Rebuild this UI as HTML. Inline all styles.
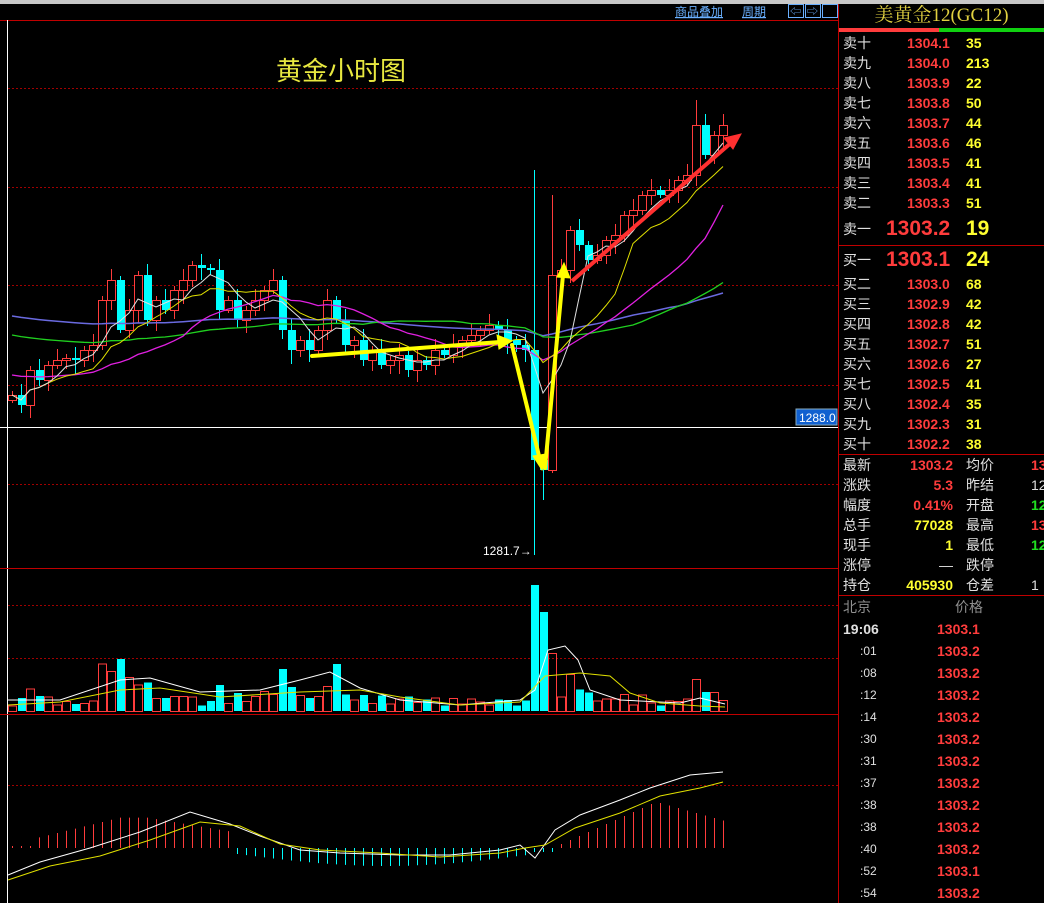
<!DOCTYPE html>
<html><head><meta charset="utf-8"><style>
body{margin:0;background:#000;width:1044px;height:903px;overflow:hidden;position:relative;font-family:"Liberation Sans","Noto Sans CJK SC",sans-serif}
#topbar{position:absolute;left:0;top:0;width:1044px;height:4px;background:#c8c8c8}
.t{position:absolute;white-space:nowrap;font-size:14px;line-height:20px}
.w{color:#e0e0e0}.r{color:#ff3c3c;font-weight:bold}.y{color:#ffff30;font-weight:bold}.g{color:#20e020;font-weight:bold}.gr{color:#909090}
</style></head><body>
<div id="topbar"></div>
<svg id="s" width="1044" height="903" style="position:absolute;left:0;top:0">
<line x1="0" y1="20.5" x2="838" y2="20.5" stroke="#c00000"/>
<line x1="838.5" y1="4" x2="838.5" y2="903" stroke="#c00000"/>
<line x1="7.5" y1="20" x2="7.5" y2="903" stroke="#fff"/>
<g stroke="#a00000" stroke-dasharray="2,2">
<line x1="8" y1="88.5" x2="838" y2="88.5"/><line x1="8" y1="187.5" x2="838" y2="187.5"/><line x1="8" y1="285.5" x2="838" y2="285.5"/><line x1="8" y1="385.5" x2="838" y2="385.5"/><line x1="8" y1="484.5" x2="838" y2="484.5"/>
<line x1="8" y1="605.5" x2="838" y2="605.5"/><line x1="8" y1="658.5" x2="838" y2="658.5"/>
<line x1="8" y1="785.5" x2="838" y2="785.5"/>
</g>
<line x1="0" y1="427.5" x2="838" y2="427.5" stroke="#fff"/>
<line x1="0" y1="568.5" x2="838" y2="568.5" stroke="#c00000"/>
<line x1="0" y1="714.5" x2="838" y2="714.5" stroke="#c00000"/>
<line x1="838" y1="30.5" x2="1044" y2="30.5" stroke="#c00000"/>
<rect x="839" y="28" width="100" height="4" fill="#ff3c3c"/><rect x="939" y="28" width="105" height="4" fill="#10d010"/>
<line x1="838" y1="245.5" x2="1044" y2="245.5" stroke="#c00000"/>
<line x1="838" y1="454.5" x2="1044" y2="454.5" stroke="#c00000"/>
<line x1="838" y1="595.5" x2="1044" y2="595.5" stroke="#c00000"/>
<rect x="796" y="409" width="41" height="16" fill="#1060d0" stroke="#8ab" />
<text x="799" y="422" fill="#fff" font-size="12" font-family="Liberation Sans">1288.0</text>
<text x="483" y="555" fill="#fff" font-size="12" font-family="Liberation Sans">1281.7→</text>
<text x="276" y="80" fill="#e8e840" font-size="26" font-family="Liberation Sans,Noto Sans CJK SC,sans-serif">黄金小时图</text>
<g fill="none" stroke="#6ab0ff" stroke-width="1"><rect x="788.5" y="4.5" width="15" height="13"/><rect x="805.5" y="4.5" width="15" height="13"/><rect x="822.5" y="4.5" width="15" height="13"/></g>
<text x="790" y="15" fill="#6ab0ff" font-size="11">⇦</text><text x="807" y="15" fill="#6ab0ff" font-size="11">⇨</text>
<text x="675" y="16" fill="#6ab0ff" font-size="12" text-decoration="underline" font-family="Liberation Sans,Noto Sans CJK SC,sans-serif">商品叠加</text>
<text x="742" y="16" fill="#6ab0ff" font-size="12" text-decoration="underline" font-family="Liberation Sans,Noto Sans CJK SC,sans-serif">周期</text>
<g id="g"></g>
<g fill="#ffff00" stroke="#ffff00" stroke-width="4" stroke-linecap="round">
<line x1="312" y1="356" x2="500" y2="342"/><polygon points="512,341 497,335 499,349" stroke-width="1"/>
<line x1="512" y1="345" x2="540" y2="460"/><polygon points="542,470 533,456 546,454" stroke-width="1"/>
<line x1="545" y1="468" x2="563" y2="275"/><polygon points="564,263 557,277 570,278" stroke-width="1"/>
</g>
<g stroke="#ff3030" stroke-width="4" fill="#ff3030"><line x1="572" y1="281" x2="732" y2="142"/><polygon points="741,134 724,138 733,149" stroke-width="1"/></g>
</svg>
<div class="t" style="left:839px;top:4px;width:205px;text-align:center;color:#e0d040;font-size:19px;line-height:24px;font-family:'Liberation Serif','Noto Serif CJK SC',serif">美黄金12(GC12)</div>
<div id="p"></div>
<script>
var C=[395,405,370,380,365,360,358,360,350,345,300,280,330,310,275,320,300,310,290,280,265,268,270,310,300,320,310,300,290,280,330,350,340,350,330,300,320,345,340,360,350,365,360,355,370,360,365,350,355,345,340,335,330,325,330,340,345,350,460,470,275,270,230,245,260,255,240,235,215,210,195,190,195,190,180,175,125,155,135,125];
var h='';var X=function(i){return 12+i*9};
function ma(n){var p=[];for(var i=0;i<C.length;i++){var s=0,k=0;for(var j=Math.max(0,i-n+1);j<=i;j++){s+=C[j];k++}var v=s/k;if(n>10&&i<n){var w=1-i/n;v=v*(1-w)+(n>=60?316:n>=40?335:375)*w}p.push(X(i)+','+v.toFixed(1))}return p.join(' ')}
for(var i=0;i<C.length;i++){var o=i?C[i-1]:400,c=C[i],x=X(i);var tp=Math.min(o,c),bt=Math.max(o,c);if(bt-tp<2)bt=tp+2;var hi=tp-(4+(i*7)%14),lo=bt+(3+(i*5)%12);
if(i==58){hi=170;lo=555}if(i==59){hi=460;lo=500}if(i==60)hi=195;if(i==76)hi=100;
var up=c<o;var col=up?'#ff3c3c':'#00ffff';
h+='<line x1="'+(x+.5)+'" y1="'+hi+'" x2="'+(x+.5)+'" y2="'+lo+'" stroke="'+col+'"/>';
h+=up?'<rect x="'+(x-3.5)+'" y="'+(tp+.5)+'" width="8" height="'+(bt-tp)+'" fill="#000" stroke="'+col+'"/>':'<rect x="'+(x-3)+'" y="'+tp+'" width="8" height="'+(bt-tp)+'" fill="'+col+'"/>';
var v=(i==58)?126:(i==59)?99:(Math.abs(c-o)*0.5+3+(i*13)%8);if(i>=10&&i<=13)v+=20;if(i==36)v=47;if(i>=28&&i<=32)v+=8;if(i==60)v=58;if(i>=61&&i<=64)v+=8;v=Math.min(v,126);
h+=up?'<rect x="'+(x-3.5)+'" y="'+(711.5-v)+'" width="8" height="'+v+'" fill="none" stroke="#ff3c3c"/>':'<rect x="'+(x-3)+'" y="'+(711-v)+'" width="8" height="'+v+'" fill="#00ffff"/>';
var m;if(i<3)m=2;else if(i<25)m=4+Math.min(i,12)*2.2-(i>15?(i-15)*1.5:0);else if(i<58)m=-6-Math.sin((i-25)/33*3.14)*12;else if(i<61)m=-4;else m=Math.min(45,(i-60)*4);if(i>72)m=45-(i-72)*2.5;
h+='<line x1="'+(x+.5)+'" y1="848" x2="'+(x+.5)+'" y2="'+(848-m).toFixed(1)+'" stroke="'+(m>=0?'#ff3c3c':'#00ffff')+'"/>';}
h+='<polyline fill="none" stroke="#6a6ae0" stroke-width="1.5" points="'+ma(60)+'"/>';
h+='<polyline fill="none" stroke="#20d020" stroke-width="1.3" points="'+ma(40)+'"/>';
h+='<polyline fill="none" stroke="#e020e0" stroke-width="1.3" points="'+ma(20)+'"/>';
h+='<polyline fill="none" stroke="#e0e000" points="'+ma(10)+'"/>';
h+='<polyline fill="none" stroke="#e0e0e0" points="'+ma(5)+'"/>';
h+='<polyline fill="none" stroke="#fff" points="8,700 60,700 120,680 150,678 200,692 260,690 300,680 330,672 360,688 400,700 460,705 520,700 535,690 548,650 565,646 578,660 590,690 620,700 680,703 700,698 725,704"/>';
h+='<polyline fill="none" stroke="#e0e000" points="8,705 60,702 120,690 160,688 220,697 300,692 360,690 400,697 460,705 520,702 545,676 580,673 610,676 630,693 660,703 700,706 725,707"/>';
h+='<polyline fill="none" stroke="#fff" points="8,875 40,862 90,848 140,832 190,812 230,824 260,836 300,850 340,853 400,855 450,855 500,850 520,845 535,858 555,830 580,815 620,800 650,788 690,775 723,772"/>';
h+='<polyline fill="none" stroke="#e0e000" points="8,880 50,866 100,856 150,840 200,822 240,826 280,844 320,850 380,853 440,857 500,853 525,848 545,845 575,828 620,813 660,796 700,788 723,782"/>';
document.getElementById('g').innerHTML=h;
var p='';function T(x,y,c,s,extra){p+='<div class="t '+c+'" style="left:'+x+'px;top:'+(y-10)+'px;'+(extra||'')+'">'+s+'</div>'}
var sN=['十','九','八','七','六','五','四','三','二'],sP=['1304.1','1304.0','1303.9','1303.8','1303.7','1303.6','1303.5','1303.4','1303.3'],sV=['35','213','22','50','44','46','41','41','51'];
for(var i=0;i<9;i++){var y=43+i*20;T(843,y,'w','卖'+sN[i]);T(907,y,'r',sP[i]);T(966,y,'y',sV[i])}
T(843,229,'w','卖一');T(886,229,'r','1303.2','font-size:21px');T(966,229,'y','19','font-size:21px');
T(843,260,'w','买一');T(886,260,'r','1303.1','font-size:21px');T(966,260,'y','24','font-size:21px');
var bN=['二','三','四','五','六','七','八','九','十'],bP=['1303.0','1302.9','1302.8','1302.7','1302.6','1302.5','1302.4','1302.3','1302.2'],bV=['68','42','42','51','27','41','35','31','38'];
for(var i=0;i<9;i++){var y=284+i*20;T(843,y,'w','买'+bN[i]);T(907,y,'r',bP[i]);T(966,y,'y',bV[i])}
var L=[['最新','1303.2','r','均价','13','r'],['涨跌','5.3','r','昨结','12','w'],['幅度','0.41%','r','开盘','12','g'],['总手','77028','y','最高','13','r'],['现手','1','y','最低','12','g'],['涨停','—','w','跌停','',''],['持仓','405930','y','仓差','1','w']];
for(var i=0;i<7;i++){var y=465+i*20;T(843,y,'w',L[i][0]);T(880,y,L[i][2],L[i][1],'width:73px;text-align:right');T(966,y,'w',L[i][3]);T(1031,y,L[i][5],L[i][4])}
T(843,607,'gr','北京');T(955,607,'gr','价格');
T(843,629,'w','<b>19:06</b>');T(937,629,'r','1303.1');
var tm=[':01',':08',':12',':14',':30',':31',':37',':38',':38',':40',':52',':54'];
for(var i=0;i<12;i++){var y=651+i*22;T(860,y,'w',tm[i],'font-size:12px');T(937,y,'r',i==10?'1303.1':'1303.2')}
document.getElementById('p').innerHTML=p;
</script>
</body></html>
